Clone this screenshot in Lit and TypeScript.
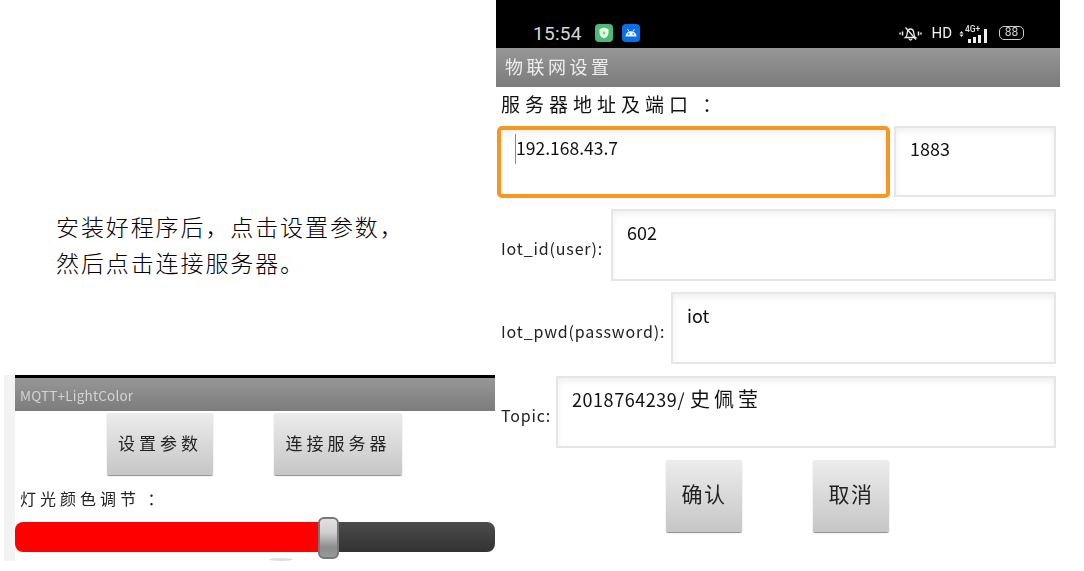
import { LitElement, html, css } from 'lit';
import { customElement } from 'lit/decorators.js';

@customElement('app-root')
export class AppRoot extends LitElement {
  static styles = css`
    :host {
      display: block;
      width: 1084px;
      height: 571px;
      overflow: hidden;
      background: #fff;
      font-family: 'Noto Sans CJK SC', 'Noto Sans', sans-serif;
      color: #111;
    }
    .page {
      display: flex;
      height: 571px;
    }

    /* left side: text and the small screenshot */
    .left {
      width: 496px;
      flex: none;
      display: flex;
      flex-direction: column;
    }
    .intro {
      height: 375px;
      box-sizing: border-box;
      padding: 211px 0 0 56px;
      font-family: 'Liberation Serif', 'Noto Sans CJK SC', serif;
      font-size: 23px;
      font-weight: 300;
      letter-spacing: 1.9px;
      line-height: 36px;
      color: #000;
    }
    .shot {
      width: 491px;
      height: 186px;
      margin-left: 4px;
      padding-left: 11px;
      box-sizing: border-box;
      background: #f3f3f3;
      filter: blur(0.6px);
    }
    .shot-inner {
      position: relative;
      height: 100%;
      background: #fff;
      border-top: 3px solid #000;
      box-sizing: border-box;
    }
    .shot-bar {
      height: 33px;
      display: flex;
      align-items: center;
      padding-left: 5px;
      font-size: 13.5px;
      letter-spacing: 0.2px;
      color: #d4d4d4;
      background: linear-gradient(#979797, #7c7c7c);
    }
    .shot-buttons {
      display: flex;
      gap: 61px;
      padding: 2px 0 0 92px;
    }
    .btn {
      display: flex;
      align-items: center;
      justify-content: center;
      box-sizing: border-box;
      border-radius: 2px;
      background: linear-gradient(#ececec, #c6c6c6);
      box-shadow: 0 1px 1px #8a8a8a;
      color: #222;
    }
    .shot-buttons .btn {
      height: 62px;
      padding-bottom: 4px;
      font-size: 17px;
      letter-spacing: 4px;
    }
    .btn-a {
      width: 106px;
    }
    .btn-b {
      width: 128px;
    }
    .shot-label {
      margin: 11px 0 0 5px;
      font-size: 16px;
      line-height: 24px;
      letter-spacing: 4px;
      color: #222;
    }
    .slider {
      display: flex;
      height: 30px;
      margin-top: 12px;
      border-radius: 8px;
      overflow: hidden;
    }
    .slider-on {
      width: 310px;
      background: #ff0000;
    }
    .slider-off {
      flex: 1;
      background: linear-gradient(#4c4c4c, #333);
    }
    .thumb {
      position: absolute;
      left: 303px;
      top: 139px;
      width: 21px;
      height: 42px;
      box-sizing: border-box;
      border: 2px solid #777;
      border-radius: 6px;
      background: linear-gradient(#e2e2e2, #d0d0d0 35%, #8c8c8c 75%, #999);
    }
    .knob-edge {
      position: absolute;
      left: 254px;
      top: 180px;
      width: 24px;
      height: 3px;
      border-radius: 50%;
      background: #ddd;
    }

    /* right side: phone screenshot */
    .phone {
      width: 564px;
      flex: none;
      height: 571px;
      filter: blur(0.35px);
    }
    .status {
      height: 48px;
      box-sizing: border-box;
      padding: 24px 0 0 37px;
      background: #000;
      display: flex;
      align-items: flex-start;
      color: #e0e0e0;
    }
    .time {
      font-family: Roboto, sans-serif;
      font-size: 19px;
      line-height: 20px;
      width: 62px;
      letter-spacing: 0.3px;
      color: #d8d8d8;
    }
    .app-icon {
      width: 18px;
      height: 18px;
      margin-right: 9px;
      display: block;
    }
    .status-right {
      margin-left: auto;
      display: flex;
      align-items: center;
      height: 18px;
      padding-right: 36px;
    }
    .hd {
      font-family: Roboto, sans-serif;
      font-size: 15px;
      margin: 0 7px 0 9px;
      color: #f0f0f0;
    }
    .net {
      position: relative;
      width: 30px;
      height: 16px;
      margin-right: 10px;
    }
    .net-text {
      position: absolute;
      left: 6px;
      top: -1px;
      font-family: Roboto, sans-serif;
      font-size: 8.5px;
      line-height: 10px;
      font-weight: 500;
    }
    .battery {
      width: 25px;
      height: 14px;
      box-sizing: border-box;
      border: 1.4px solid #ccc;
      border-radius: 5px;
      font-family: Roboto, sans-serif;
      font-size: 12px;
      line-height: 11.5px;
      text-align: center;
      color: #ccc;
    }
    .title {
      height: 39px;
      box-sizing: border-box;
      padding: 0 0 4px 9px;
      display: flex;
      align-items: center;
      font-size: 18px;
      letter-spacing: 3.5px;
      color: #ededed;
      background: linear-gradient(#979797, #7b7b7b);
    }
    .server-label {
      height: 39px;
      box-sizing: border-box;
      padding: 2px 0 0 5px;
      font-size: 19px;
      line-height: 30px;
      letter-spacing: 5px;
      color: #111;
    }
    .rows {
      display: flex;
      flex-direction: column;
      gap: 11px;
      padding-right: 4px;
    }
    .row {
      display: flex;
      align-items: center;
      height: 72px;
      padding-left: 5px;
      font-size: 16px;
    }
    .row.first {
      padding-left: 1px;
      gap: 4px;
    }
    .row.topic {
      margin-top: 1px;
    }
    .row-label {
      flex: none;
      padding-top: 6px;
      letter-spacing: 0.85px;
      color: #222;
    }
    .field {
      flex: 1;
      align-self: stretch;
      box-sizing: border-box;
      border: 2px solid #e6e6e6;
      box-shadow: inset 0 3px 6px #efefef;
      padding: 7px 0 0 14px;
      font-size: 18px;
      line-height: 28px;
      color: #111;
    }
    .field.focus {
      display: flex;
      align-items: flex-start;
      border: 4px solid #f8971f;
      border-radius: 5px;
      padding: 4px 0 0 14px;
      font-size: 17.5px;
    }
    .caret {
      width: 1px;
      height: 30px;
      background: #888;
      margin-right: 0;
    }
    .field.port {
      flex: none;
      width: 162px;
      height: 71px;
      padding-top: 6px;
    }
    .label-id {
      width: 110px;
    }
    .label-pwd {
      width: 170px;
    }
    .label-topic {
      width: 55px;
    }
    .digits {
      letter-spacing: 0.55px;
    }
    .name {
      margin-left: 5px;
      font-size: 20px;
      letter-spacing: 4px;
    }
    .actions {
      display: flex;
      gap: 71px;
      padding: 1px 0 0 170px;
    }
    .actions .btn {
      width: 76px;
      height: 72px;
      padding-bottom: 6px;
      font-size: 21px;
      letter-spacing: 1.5px;
    }
  `;

  render() {
    return html`
      <div class="page">
        <div class="left">
          <div class="intro">安装好程序后，点击设置参数，<br />然后点击连接服务器。</div>
          <div class="shot">
            <div class="shot-inner">
              <div class="shot-bar">MQTT+LightColor</div>
              <div class="shot-buttons">
                <div class="btn btn-a">设置参数</div>
                <div class="btn btn-b">连接服务器</div>
              </div>
              <div class="shot-label">灯光颜色调节 ：</div>
              <div class="slider">
                <div class="slider-on"></div>
                <div class="slider-off"></div>
              </div>
              <div class="knob-edge"></div>
              <div class="thumb"></div>
            </div>
          </div>
        </div>

        <div class="phone">
          <div class="status">
            <div class="time">15:54</div>
            <svg class="app-icon" viewBox="0 0 18 18">
              <rect width="18" height="18" rx="4" fill="#4dbb73" />
              <path d="M9 3.500l4.500 1.600v4c0 2.700-2 4.500-4.500 5.400-2.500-.9-4.500-2.700-4.500-5.400v-4z" fill="#e8f6ec" />
              <path d="M9.600 6l-2 3.400h1.500l-.7 2.600 2.200-3.500H9.100z" fill="#4dbb73" />
            </svg>
            <svg class="app-icon" viewBox="0 0 18 18">
              <rect width="18" height="18" rx="4" fill="#0b6fe8" />
              <path d="M3.500 12.500c0-3 2.400-5.200 5.500-5.200s5.500 2.200 5.500 5.200z" fill="#e6f0fd" />
              <path d="M5.500 5l1.500 2.500M12.500 5L11 7.500" stroke="#e6f0fd" stroke-width="1" />
              <circle cx="6.800" cy="10" r=".8" fill="#0b6fe8" />
              <circle cx="11.200" cy="10" r=".8" fill="#0b6fe8" />
            </svg>
            <div class="status-right">
              <svg width="23" height="17" viewBox="0 0 23 17" fill="none" stroke="#eee" stroke-width="1.300">
                <path d="M6.500 12.500c1.500-1 1.500-2.500 1.700-4.500.2-2.200 1.300-4 3.300-4s3.100 1.800 3.300 4c.2 2 .2 3.500 1.700 4.500z" />
                <path d="M6.500 2.500l10.500 12M10 13.500c.3 2 2.700 2 3 0" />
                <path d="M3.500 6.500v4M1 7.500v2M19.500 6.500v4M22 7.500v2" stroke-width="1.500" />
              </svg>
              <span class="hd">HD</span>
              <div class="net">
                <svg width="30" height="16" viewBox="0 0 30 16" fill="#f0f0f0">
                  <path d="M2.500 3L4.500 5.500H.5zM2.500 9L4.500 6.500H.5z" />
                  <rect x="9" y="11" width="3" height="4" />
                  <rect x="14" y="9" width="3" height="6" />
                  <rect x="19" y="7" width="3" height="8" />
                  <rect x="25" y="1" width="3" height="14" />
                </svg>
                <span class="net-text">4G+</span>
              </div>
              <div class="battery">88</div>
            </div>
          </div>
          <div class="title">物联网设置</div>
          <div class="server-label">服务器地址及端口 ：</div>
          <div class="rows">
            <div class="row first">
              <div class="field focus"><span class="caret"></span>192.168.43.7</div>
              <div class="field port">1883</div>
            </div>
            <div class="row">
              <div class="row-label label-id">Iot_id(user):</div>
              <div class="field">602</div>
            </div>
            <div class="row">
              <div class="row-label label-pwd">Iot_pwd(password):</div>
              <div class="field">iot</div>
            </div>
            <div class="row topic">
              <div class="row-label label-topic">Topic:</div>
              <div class="field"><span class="digits">2018764239/</span><span class="name">史佩莹</span></div>
            </div>
            <div class="actions">
              <div class="btn">确认</div>
              <div class="btn">取消</div>
            </div>
          </div>
        </div>
      </div>
    `;
  }
}
